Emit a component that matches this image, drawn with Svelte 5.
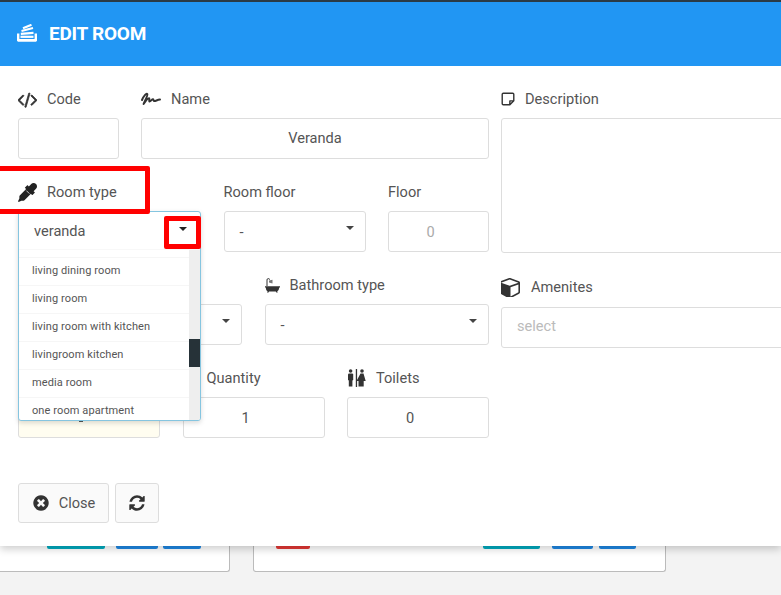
<script>
  const options = ['living dining room', 'living room', 'living room with kitchen', 'livingroom kitchen', 'media room', 'one room apartment'];
</script>

<div class="page">
  <div class="modal">
    <header class="head">
      <svg class="logo" viewBox="0 0 20 18" width="20" height="18" aria-hidden="true">
        <path d="M0 9.500h2.400v5.600h15.200V9.500H20v7.300l-1 1H1l-1-1z" fill="#fff"/>
        <g stroke="#fff" stroke-width="2.200" fill="none">
          <path d="M3.500 12.800h13"/>
          <path d="M3.800 9.800l12.700-.9"/>
          <path d="M4.500 7l11.500-3"/>
          <path d="M6 4.200L14.500.8"/>
        </g>
      </svg>
      <h1>EDIT ROOM</h1>
    </header>

    <div class="body">
      <div class="form">
        <div class="left">
          <div class="row">
            <div class="field w100">
              <div class="label">
                <svg class="ic" viewBox="0 0 1811 1792" width="19" height="19" aria-hidden="true"><path class="bold" d="M553 1399l-50 50q-10 10-23 10t-23-10l-466-466q-10-10-10-23t10-23l466-466q10-10 23-10t23 10l50 50q10 10 10 23t-10 23l-393 393 393 393q10 10 10 23t-10 23zm591-1067l-373 1291q-4 13-15.500 19.500t-23.500 2.500l-62-17q-13-4-19.500-15.500t-2.500-24.500l373-1291q4-13 15.500-19.500t23.500-2.500l62 17q13 4 19.500 15.500t2.500 24.500zm657 651l-466 466q-10 10-23 10t-23-10l-50-50q-10-10-10-23t10-23l393-393-393-393q-10-10-10-23t10-23l50-50q10-10 23-10t23 10l466 466q10 10 10 23t-10 23z"/></svg>
                Code
              </div>
              <input class="input" value="" />
            </div>
            <div class="field grow">
              <div class="label">
                <svg class="ic" viewBox="0 0 20 14" width="20" height="14" aria-hidden="true"><path d="M1 8C3 3.500 5.500 1 6.300 2c.9 1.200-2.600 7-3.700 10 2-3 4.200-6 5.400-5.800 1 .2-.3 3 .5 3.300 1 .3 2.500-2.500 3.500-2.300.8.200.4 1.800 1.300 1.900 1.300.100 3-1.300 5.700-1.600" fill="none" stroke="#333" stroke-width="2" stroke-linecap="round" stroke-linejoin="round"/></svg>
                Name
              </div>
              <input class="input center lifted-small" value="Veranda" />
            </div>
          </div>

          <div class="row">
            <div class="field w183">
              <div class="label">
                <svg class="ic dropper" viewBox="0 0 1792 1792" width="19" height="19" aria-hidden="true"><path d="M1698 94q94 94 94 226.500t-94 225.500l-225 223 104 104q10 10 10 23t-10 23l-210 210q-10 10-23 10t-23-10l-105-105-603 603q-37 37-90 37h-203l-256 128-64-64 128-256v-203q0-53 37-90l603-603-105-105q-10-10-10-23t10-23l210-210q10-10 23-10t23 10l104 104 223-225q93-94 225.500-94t226.500 94z"/><path d="M790 720l282 282" stroke="#fff" stroke-width="70" fill="none"/></svg>
                Room type
              </div>
              <div class="dropdown">
                <div class="trigger"><span>veranda</span><i class="caret"></i></div>
                <div class="list">
                  <ul>
                    {#each options as o}
                      <li>{o}</li>
                    {/each}
                  </ul>
                  <div class="track"><div class="thumb"></div></div>
                </div>
              </div>
              <div class="mark mark-label"></div>
              <div class="mark mark-caret"></div>
            </div>
            <div class="field w142">
              <div class="label">Room floor</div>
              <div class="select"><span>-</span><i class="caret"></i></div>
            </div>
            <div class="field grow">
              <div class="label">Floor</div>
              <input class="input center num muted" value="0" />
            </div>
          </div>

          <div class="row">
            <div class="field w224">
              <div class="label"></div>
              <div class="select"><i class="caret end"></i></div>
            </div>
            <div class="field grow">
              <div class="label">
                <svg class="ic" viewBox="0 0 15 15" width="15" height="15" aria-hidden="true"><path d="M0 8.200h15v1.300h-.8c-.1 2-.9 3.300-2 3.800l.6 1.200h-1.500l-.5-.9H4l-.5.900H2l.6-1.200C1.400 12.800.9 11.500.8 9.500H0z"/><path d="M1.500 8V2.200C1.500 1 2.300.3 3.300.3S5 1 5 1.700h-.9c0-.4-.3-.6-.8-.6s-.8.4-.8 1.100V8z"/><path d="M4 2.400l3.500-.6v3.700L4 4.500z" fill="#777"/></svg>
                Bathroom type
              </div>
              <div class="select"><span>-</span><i class="caret"></i></div>
            </div>
          </div>

          <div class="row">
            <div class="field w142">
              <div class="label"></div>
              <div class="input cream"><i class="stub"></i></div>
            </div>
            <div class="field w142">
              <div class="label quantity">Quantity</div>
              <input class="input center num" value="1" />
            </div>
            <div class="field grow">
              <div class="label">
                <svg class="ic" viewBox="0 0 19 18" width="19" height="18" aria-hidden="true"><circle cx="3.600" cy="2" r="1.800"/><rect x="1" y="4.400" width="5.200" height="7" rx="1.200"/><rect x="1.800" y="10" width="3.600" height="7.500"/><rect x="8.800" y="0" width="1.300" height="18"/><circle cx="15" cy="2" r="1.800"/><path d="M13.500 4.400h3l2.200 7.600h-2v5.500h-5.200V12h-2z"/></svg>
                Toilets
              </div>
              <input class="input center num" value="0" />
            </div>
          </div>
        </div>

        <div class="right">
          <div class="label">
            <svg class="ic" viewBox="0 0 15 15" width="14" height="14" aria-hidden="true"><path d="M9.500 13.700H2.500c-.7 0-1.200-.5-1.200-1.200V2.500c0-.7.500-1.200 1.200-1.200h10c.7 0 1.200.5 1.200 1.200v7zM9.500 13.700V9.500h4.200" fill="none" stroke="#333" stroke-width="1.500" stroke-linejoin="round"/></svg>
            Description
          </div>
          <textarea class="area"></textarea>
          <div class="label amenites">
            <svg class="ic cube" viewBox="128 128 1536 1536" width="19" height="19" aria-hidden="true"><path d="M896 1629l640-349v-636l-640 233v752zm-64-865l698-254-698-254-698 254zm832-252v768q0 35-18 65t-49 47l-704 384q-28 16-61 16t-61-16l-704-384q-31-17-49-47t-18-65v-768q0-40 23-73t61-47l704-256q22-8 44-8t44 8l704 256q38 14 61 47t23 73z"/></svg>
            Amenites
          </div>
          <input class="input lifted" placeholder="select" />
        </div>
      </div>

      <div class="actions">
        <button class="btn close" type="button">
          <svg viewBox="0 0 1792 1792" width="18" height="18" aria-hidden="true"><path d="M1277 1122q0-26-19-45l-181-181 181-181q19-19 19-45 0-27-19-46l-90-90q-19-19-46-19-26 0-45 19l-181 181-181-181q-19-19-45-19-27 0-46 19l-90 90q-19 19-19 46 0 26 19 45l181 181-181 181q-19 19-19 45 0 27 19 46l90 90q19 19 46 19 26 0 45-19l181-181 181 181q19 19 45 19 27 0 46-19l90-90q19-19 19-46zm387-226q0 209-103 385.500t-279.500 279.500-385.500 103-385.500-103-279.500-279.500-103-385.500 103-385.500 279.500-279.500 385.500-103 385.500 103 279.500 279.500 103 385.500z"/></svg>
          Close
        </button>
        <button class="btn refresh" type="button" aria-label="Refresh">
          <svg viewBox="0 0 1792 1792" width="18" height="18" aria-hidden="true"><path d="M1639 1056q0 5-1 7-64 268-268 434.500t-478 166.500q-146 0-282.500-55t-243.500-157l-129 129q-19 19-45 19t-45-19-19-45v-448q0-26 19-45t45-19h448q26 0 45 19t19 45-19 45l-137 137q71 66 161 102t187 36q134 0 250-65t186-179q11-17 53-117 8-23 30-23h192q13 0 22.500 9.500t9.500 22.500zm25-800v448q0 26-19 45t-45 19h-448q-26 0-45-19t-19-45 19-45l138-138q-148-137-349-137-134 0-250 65t-186 179q-11 17-53 117-8 23-30 23h-199q-13 0-22.500-9.500t-9.500-22.500v-7q65-268 270-434.500t480-166.500q146 0 284 55.500t245 156.500l130-129q19-19 45-19t45 19 19 45z"/></svg>
        </button>
      </div>
    </div>
  </div>

  <div class="cards">
    <div class="card first">
      <i class="tab teal t58"></i><i class="tab blue t42 m6"></i><i class="tab blue t38"></i>
    </div>
    <div class="card second">
      <i class="tab red t34"></i>
      <i class="tab teal t57 auto"></i><i class="tab blue t41 m6"></i><i class="tab blue t37"></i>
    </div>
  </div>
</div>

<style>
  :global(body) {
    margin: 0;
    background: #f3f3f3;
    overflow: hidden;
  }
  .page {
    width: 781px;
    height: 595px;
    overflow: hidden;
    font-family: Roboto, "Liberation Sans", sans-serif;
    font-size: 14.6px;
    color: #555;
  }
  .modal {
    position: relative;
    z-index: 2;
    background: #fff;
    box-shadow: 0 3px 8px rgba(0, 0, 0, 0.2);
  }
  .head {
    display: flex;
    align-items: center;
    gap: 12px;
    box-sizing: border-box;
    height: 66px;
    padding: 0 0 2px 17px;
    background: #2196f3;
    border-top: 2px solid #2a3a45;
  }
  .head h1 {
    margin: 0;
    font-size: 19px;
    font-weight: 700;
    color: #fff;
    letter-spacing: -0.25px;
  }
  .body {
    padding: 23px 0 23px 18px;
  }
  .form {
    display: flex;
    gap: 12px;
  }
  .left {
    width: 471px;
    flex: none;
    display: flex;
    flex-direction: column;
    gap: 23px;
  }
  .right {
    width: 300px;
    flex: none;
    display: flex;
    flex-direction: column;
  }
  .row {
    display: flex;
    gap: 22.500px;
  }
  .field {
    position: relative;
    display: flex;
    flex-direction: column;
    min-width: 0;
  }
  .w100 { width: 100.500px; }
  .w142 { width: 142px; }
  .w183 { width: 183px; }
  .w224 { width: 224px; }
  .grow { flex: 1; }
  .label {
    display: flex;
    align-items: center;
    height: 20px;
    margin-bottom: 9px;
    line-height: 20px;
  }
  .quantity { padding-left: 24px; }
  .amenites {
    margin-top: 24px;
    margin-bottom: 10px;
  }
  .ic {
    flex: none;
    margin-right: 10px;
    fill: #333;
  }
  .dropper { fill: #222; }
  .cube { margin-right: 11px; }
  .bold { stroke: #333; stroke-width: 70; }
  .input, .select, .area {
    box-sizing: border-box;
    width: 100%;
    height: 41px;
    border: 1px solid #ddd;
    border-radius: 3px;
    background: #fff;
    font: inherit;
    color: inherit;
    outline: none;
    margin: 0;
  }
  .input { padding: 0 15px; }
  .input::placeholder { color: #bbb; opacity: 1; }
  .lifted { padding-bottom: 3px; }
  .lifted-small { padding-bottom: 2px; }
  .center { text-align: center; }
  .num { padding-right: 31px; }
  .muted { color: #aaa; }
  .cream {
    display: flex;
    justify-content: center;
    padding: 23px 16px 0 0;
    background: #fffdf0;
  }
  .stub {
    display: block;
    width: 4px;
    height: 1px;
    background: #555;
  }
  .area {
    display: block;
    height: 135px;
    resize: none;
    padding: 8px 15px;
  }
  .select {
    display: flex;
    align-items: center;
    justify-content: space-between;
    padding: 0 11px 0 15px;
  }
  .caret {
    flex: none;
    width: 0;
    height: 0;
    margin-top: -7px;
    border-left: 4px solid transparent;
    border-right: 4px solid transparent;
    border-top: 4px solid #444;
  }
  .end { margin-left: auto; }
  .dropdown {
    position: absolute;
    z-index: 3;
    top: 29px;
    left: 0;
    box-sizing: border-box;
    width: 183px;
    height: 210px;
    border: 1px solid #85c5e0;
    border-radius: 3px;
    background: #fff;
    box-shadow: 0 2px 5px rgba(0, 0, 0, 0.15);
    overflow: hidden;
  }
  .trigger {
    display: flex;
    align-items: center;
    justify-content: space-between;
    height: 37px;
    padding: 0 13px 0 15px;
  }
  .trigger .caret { margin-top: -3px; border-top-color: #222; }
  .list {
    display: flex;
    height: 171px;
    border-top: 1px solid #f8f8f8;
  }
  .list ul {
    flex: 1;
    margin: 0;
    padding: 7px 0 0;
    list-style: none;
    overflow: hidden;
  }
  .list li {
    box-sizing: border-box;
    height: 28px;
    line-height: 25px;
    padding-left: 13px;
    border-top: 1px solid #f6f6f6;
    font-size: 11px;
    letter-spacing: 0.1px;
    color: #555;
    white-space: nowrap;
  }
  .track {
    flex: none;
    width: 11px;
    background: #eee;
    padding-top: 89px;
  }
  .thumb {
    height: 28px;
    background: #263238;
  }
  .mark {
    position: absolute;
    z-index: 4;
    box-sizing: border-box;
    border: 5px solid #f00;
    border-radius: 2px;
  }
  .mark-label {
    top: -16px;
    left: -24px;
    width: 156px;
    height: 48px;
  }
  .mark-caret {
    top: 34px;
    left: 146px;
    width: 37px;
    height: 33px;
  }
  .actions {
    display: flex;
    gap: 6px;
    margin-top: 45px;
  }
  .btn {
    display: flex;
    align-items: center;
    justify-content: center;
    box-sizing: border-box;
    height: 40px;
    padding: 0;
    border: 1px solid #ddd;
    border-radius: 3px;
    background: #fafafa;
    font: inherit;
    color: #555;
  }
  .btn svg { fill: #333; }
  .close { width: 91px; gap: 9px; }
  .refresh { width: 44px; }
  .cards {
    display: flex;
    gap: 23px;
    margin-left: -20px;
  }
  .card {
    box-sizing: border-box;
    display: flex;
    align-items: flex-start;
    height: 26px;
    background: #fff;
    border-right: 1px solid #bbb;
    border-bottom: 1px solid #bbb;
    border-radius: 0 0 3px 3px;
  }
  .first { width: 250px; padding: 0 28px 0 67px; gap: 5px; }
  .second {
    width: 413px;
    padding: 0 29px 0 22px;
    gap: 6px;
    border-left: 1px solid #bbb;
  }
  .tab {
    display: block;
    flex: none;
    height: 3px;
    border-radius: 0 0 2px 2px;
  }
  .teal { background: #00acc1; }
  .blue { background: #1e88e5; }
  .red { background: #e53935; }
  .t58 { width: 58px; }
  .t42 { width: 42px; }
  .t38 { width: 38px; }
  .t34 { width: 34px; }
  .t57 { width: 57px; }
  .t41 { width: 41px; }
  .t37 { width: 37px; }
  .m6 { margin-left: 6px; }
  .auto { margin-left: auto; }
</style>
